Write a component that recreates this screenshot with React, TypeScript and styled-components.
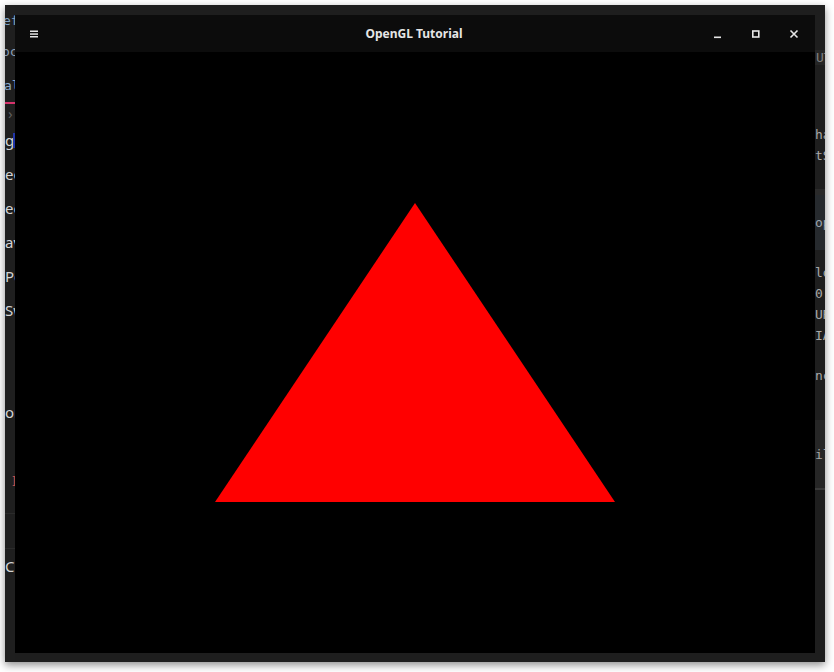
import React from "react";
import styled, { createGlobalStyle } from "styled-components";

const GlobalStyle = createGlobalStyle`
  html, body {
    margin: 0;
    padding: 0;
    background: #ffffff;
  }
  body {
    font-family: "Noto Sans", "Open Sans", sans-serif;
  }
`;

const Page = styled.div`
  width: 834px;
  height: 672px;
  padding: 5px;
  box-sizing: border-box;
`;

const Frame = styled.div`
  width: 820px;
  height: 657px;
  display: grid;
  grid-template-columns: 10px 800px 10px;
  grid-template-rows: 10px 638px 9px;
  background: #1e1e1e;
  box-shadow: 0 3px 8px rgba(0, 0, 0, 0.45);
`;

const Strip = styled.div<{ side: "left" | "right" }>`
  grid-column: ${({ side }) => (side === "left" ? 1 : 3)};
  grid-row: 1 / 4;
  overflow: hidden;
  display: flex;
  flex-direction: column;
  background: ${({ side }) => (side === "left" ? "#1f1f1f" : "#1e1e1e")};
`;

/* one editor line peeking out beside the window */
const Row = styled.div<{ h: number; bg?: string }>`
  flex: 0 0 ${({ h }) => h}px;
  display: flex;
  align-items: center;
  white-space: nowrap;
  background: ${({ bg }) => bg ?? "transparent"};
`;

const Code = styled.span<{ color?: string; shift?: number }>`
  flex-shrink: 0;
  margin-left: ${({ shift }) => shift ?? 0}px;
  font-family: "DejaVu Sans Mono", "Liberation Mono", monospace;
  font-size: 13px;
  line-height: 1;
  color: ${({ color }) => color ?? "#a8a8a8"};
`;

const Label = styled.span<{ color?: string; indent?: number }>`
  flex-shrink: 0;
  display: flex;
  align-items: center;
  padding-left: ${({ indent }) => indent ?? 0}px;
  font-family: "Noto Sans", "Open Sans", sans-serif;
  font-size: 15px;
  line-height: 1;
  color: ${({ color }) => color ?? "#d4d4d4"};
`;

const Caret = styled.span`
  display: inline-block;
  width: 3px;
  height: 15px;
  margin-left: -1px;
  background: #2235a8;
`;

const Rule = styled.div<{ h: number; bg: string }>`
  flex: 0 0 ${({ h }) => h}px;
  background: ${({ bg }) => bg};
`;

const Window = styled.div`
  grid-column: 2;
  grid-row: 2;
  display: flex;
  flex-direction: column;
  background: #000;
`;

const TitleBar = styled.div`
  flex: 0 0 37px;
  background: #0c0c0c;
  display: grid;
  grid-template-columns: 1fr auto 1fr;
  align-items: center;
  padding: 0 13px 0 11px;
`;

const TitleText = styled.div`
  color: #e6e6e6;
  font-family: "Noto Sans", "Open Sans", sans-serif;
  font-weight: 700;
  font-size: 12px;
`;

const Controls = styled.div`
  justify-self: end;
  display: flex;
  align-items: center;
  gap: 22px;
`;

const IconButton = styled.div`
  width: 16px;
  height: 16px;
  display: flex;
  align-items: center;
  justify-content: center;
`;

const Canvas = styled.div`
  flex: 1;
  display: flex;
  background: #000;
`;

const Menu = () => (
  <IconButton>
    <svg width="10" height="10" viewBox="0 0 10 10">
      <rect x="1" y="1.5" width="8" height="1.5" fill="#e6e6e6" />
      <rect x="1" y="4.3" width="8" height="1.5" fill="#e6e6e6" />
      <rect x="1" y="7" width="8" height="1.5" fill="#e6e6e6" />
    </svg>
  </IconButton>
);

const Minimize = () => (
  <IconButton>
    <svg width="10" height="10" viewBox="0 0 10 10">
      <rect x="1" y="7.5" width="7" height="1.6" fill="#e6e6e6" />
    </svg>
  </IconButton>
);

const Maximize = () => (
  <IconButton>
    <svg width="10" height="10" viewBox="0 0 10 10">
      <rect x="1.8" y="2" width="6" height="6" fill="none" stroke="#e6e6e6" strokeWidth="1.6" />
    </svg>
  </IconButton>
);

const Close = () => (
  <IconButton>
    <svg width="10" height="10" viewBox="0 0 10 10">
      <path d="M1.5 1.5 L8.5 8.5 M8.5 1.5 L1.5 8.5" stroke="#e6e6e6" strokeWidth="1.6" />
    </svg>
  </IconButton>
);

const LeftEditor = () => (
  <Strip side="left">
    <Row h={30}><Code color="#7fa3c6" shift={-2}>ef</Code></Row>
    <Row h={33}><Code color="#8a9db3" shift={-3}>oc</Code></Row>
    <Row h={34}><Code color="#8aa7c8" shift={-1}>al</Code></Row>
    <Rule h={2} bg="#d6336c" />
    <Row h={19}><Label color="#5e5e5e" indent={3}>›</Label></Row>
    <Row h={34}><Label>g<Caret /></Label></Row>
    <Row h={34}><Label>ec</Label></Row>
    <Row h={34}><Label>ec</Label></Row>
    <Row h={34}><Label>av</Label></Row>
    <Row h={34}><Label>Po</Label></Row>
    <Row h={34}><Label>Sw</Label></Row>
    <Row h={68} />
    <Row h={34}><Label>or</Label></Row>
    <Row h={34} />
    <Row h={34}><Label color="#c0504d" indent={7}>I</Label></Row>
    <Row h={16} />
    <Rule h={1} bg="#2b2b2b" />
    <Row h={34} />
    <Rule h={1} bg="#2b2b2b" />
    <Row h={34}><Label>C</Label></Row>
  </Strip>
);

const RightEditor = () => (
  <Strip side="right">
    <Row h={45} />
    <Row h={15} bg="#262626"><Code color="#808080" shift={1}>UT</Code></Row>
    <Row h={58} />
    <Row h={22}><Code>ha</Code></Row>
    <Row h={21}><Code>tS</Code></Row>
    <Row h={23} />
    <Rule h={6} bg="#2a2a2a" />
    <Row h={55} bg="#262a2e"><Code color="#9aa4ae">op</Code></Row>
    <Row h={12} />
    <Row h={21}><Code>lo</Code></Row>
    <Row h={21}><Code>0,</Code></Row>
    <Row h={21}><Code>UR</Code></Row>
    <Row h={21}><Code>IA</Code></Row>
    <Row h={19} />
    <Row h={21}><Code>nc</Code></Row>
    <Row h={34} />
    <Row h={68} bg="#262626"><Code>il</Code></Row>
    <Rule h={2} bg="#3a3a3a" />
  </Strip>
);

export default function App() {
  return (
    <Page>
      <GlobalStyle />
      <Frame>
        <LeftEditor />
        <Window>
          <TitleBar>
            <Menu />
            <TitleText>OpenGL Tutorial</TitleText>
            <Controls>
              <Minimize />
              <Maximize />
              <Close />
            </Controls>
          </TitleBar>
          <Canvas>
            <svg width="800" height="601" viewBox="0 0 800 601">
              <polygon points="400,151 200,450 600,450" fill="#ff0000" />
            </svg>
          </Canvas>
        </Window>
        <RightEditor />
      </Frame>
    </Page>
  );
}
